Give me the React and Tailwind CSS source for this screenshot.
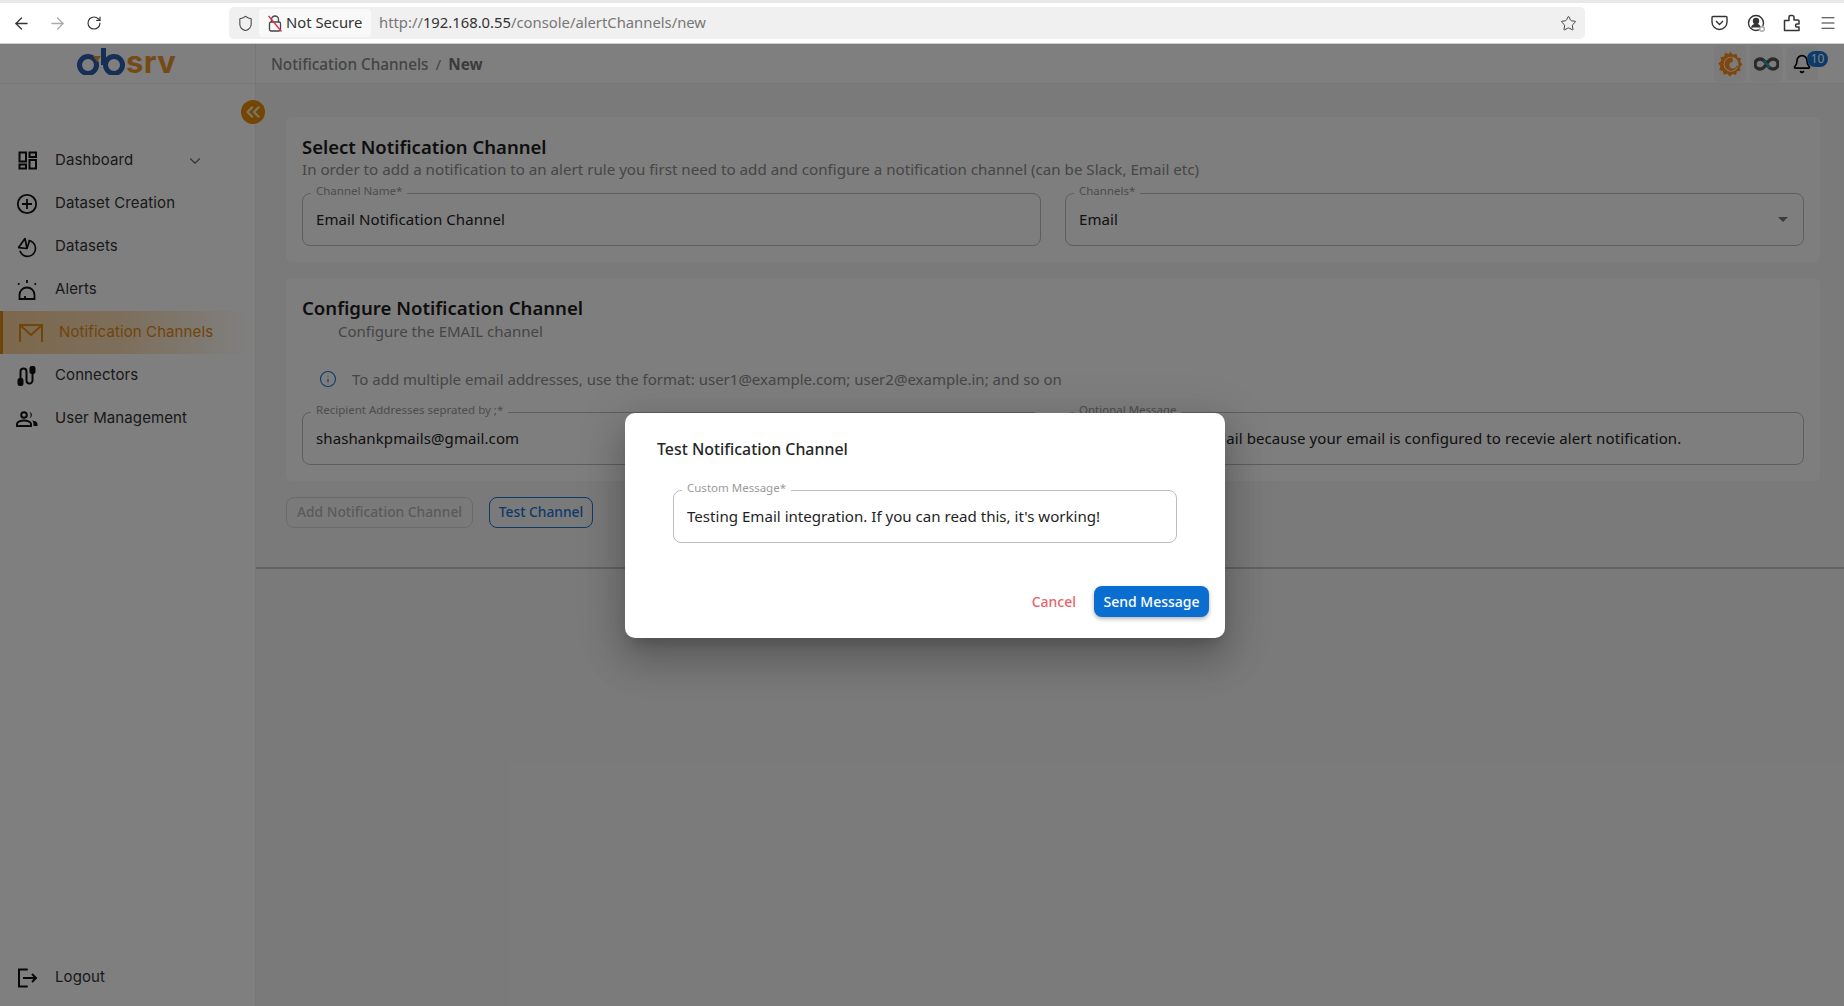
import { ArrowLeft, ArrowRight, RotateCw, Shield, Star, Menu, ChevronDown, ChevronsLeft, Info, Bell } from "lucide-react";

const navBefore = [
  { label: "Dashboard", icon: DashboardIcon, chevron: true },
  { label: "Dataset Creation", icon: PlusCircleIcon },
  { label: "Datasets", icon: PieIcon },
  { label: "Alerts", icon: SirenIcon },
];

const navAfter = [
  { label: "Connectors", icon: ConnectorIcon },
  { label: "User Management", icon: UsersIcon },
];

function DashboardIcon() {
  return (
    <svg width="19" height="19" viewBox="0 0 19 19" fill="none" stroke="#111" strokeWidth="2">
      <rect x="1.500" y="1.500" width="6.500" height="9" />
      <rect x="11.500" y="1.500" width="6.500" height="4.500" />
      <rect x="1.500" y="13.500" width="6.500" height="4" />
      <rect x="11.500" y="9" width="6.500" height="8.500" />
    </svg>
  );
}

function PlusCircleIcon() {
  return (
    <svg width="22" height="22" viewBox="0 0 22 22" fill="none" stroke="#111" strokeWidth="1.800">
      <circle cx="11" cy="11" r="9.200" />
      <path d="M11 6v10M6 11h10" />
    </svg>
  );
}

function PieIcon() {
  return (
    <svg width="22" height="22" viewBox="0 0 22 22" fill="none" stroke="#111" strokeWidth="1.700" strokeLinejoin="round">
      <path d="M9 2.500 2.600 11.600 11 12.500z" />
      <path d="M12.500 4.400a8 8 0 1 1-8.600 10.400" />
      <path d="M11 12.500l2.600-8" />
    </svg>
  );
}

function SirenIcon() {
  return (
    <svg width="22" height="22" viewBox="0 0 22 22" fill="none" stroke="#111" strokeWidth="1.800">
      <path d="M3.500 20v-4a7.500 7.500 0 0 1 15 0v4H3.500z" />
      <path d="M9 20v-3" />
      <path d="M11 1v3M2 4.500l1.500 1M20 4.500l-1.500 1" />
    </svg>
  );
}

function MailIcon() {
  return (
    <svg width="26" height="20" viewBox="0 0 26 20" fill="none" stroke="#e08a14" strokeWidth="2">
      <path d="M2 19V2h22v17" />
      <path d="M2 2l11 10L24 2" />
    </svg>
  );
}

function ConnectorIcon() {
  return (
    <svg width="20" height="20" viewBox="0 0 20 20" fill="none" stroke="#111" strokeWidth="2">
      <path d="M3.500 14V5.500a3 3 0 0 1 6 0v9a3 3 0 0 0 6 0V6" />
      <rect x="1.500" y="13" width="4" height="6" rx="1.200" fill="#111" />
      <rect x="13.500" y="1" width="4" height="6" rx="1.200" fill="#111" />
    </svg>
  );
}

function UsersIcon() {
  return (
    <svg width="22" height="16" viewBox="0 0 22 16" fill="#111">
      <circle cx="8" cy="4" r="2.800" fill="none" stroke="#111" strokeWidth="2" />
      <path d="M13.500 1a3.200 3.200 0 0 1 0 6.200 5 5 0 0 0 0-6.200z" />
      <path d="M1 15v-2c0-2.400 4-3.600 7-3.600s7 1.200 7 3.600v2z" fill="none" stroke="#111" strokeWidth="2" />
      <path d="M16 9.500c3 .3 5.500 1.400 5.500 3.500v2H17.500v-2c0-1.400-.6-2.500-1.500-3.500z" />
    </svg>
  );
}

function LogoutIcon() {
  return (
    <svg width="21" height="20" viewBox="0 0 21 20" fill="none" stroke="#111" strokeWidth="2">
      <path d="M10 1.500H2v17h8" strokeLinecap="round" />
      <path d="M6 10h13M15 6l4 4-4 4" />
    </svg>
  );
}

function PuzzleIcon() {
  return (
    <svg width="18" height="18" viewBox="0 0 18 18" fill="none" stroke="#333" strokeWidth="1.500" strokeLinejoin="round" className="ml-[18px]">
      <path d="M1.500 16.500V6.500H6V6a1.800 1.800 0 0 1 0-.8V3a1.500 1.500 0 0 1 1.500-1.500h1.700a1.800 1.800 0 0 1 1.800 1.800V6h4a1 1 0 0 1 1 1v3h-2a1.500 1.500 0 0 0 0 3h2v3.500z" />
    </svg>
  );
}

function GrafanaIcon() {
  return (
    <svg width="25" height="26" viewBox="0 0 24 25">
      <path fill="#ff8c1a" d="M12 .8l2.300 2.900 3.500-1 .8 3.500 3.600.8-1 3.400 2.300 2.600-2.600 2.300.8 3.600-3.500.6-.9 3.500-3.500-1-2.500 2.600-2.400-2.700-3.500.9-.7-3.600-3.500-1 1.100-3.400L.4 11.800l2.800-2.300-.9-3.500 3.600-.7 1-3.500 3.400 1.100z" />
      <circle cx="12.500" cy="12.800" r="7.200" fill="#f7f7f7" />
      <path d="M14 6.800a6 6 0 1 0 4.400 7.400c-.5 2-2.500 3.400-4.600 3a4 4 0 0 1-3-4.600 3 3 0 0 1 3.500-2.300" fill="#ff8c1a" stroke="#ff8c1a" strokeWidth="0.800" />
      <circle cx="13" cy="13" r="1.800" fill="#f7f7f7" />
    </svg>
  );
}

function InfinityIcon() {
  return (
    <svg width="25" height="14" viewBox="0 0 25 14" fill="none">
      <path d="M12.500 7C10.500 3.500 8.500 2 6 2a5 5 0 0 0 0 10c2.500 0 4.500-1.500 6.500-5zm0 0c2-3.500 4-5 6.500-5a5 5 0 0 1 0 10c-2.500 0-4.500-1.500-6.500-5z" stroke="#555" strokeWidth="3.400" />
      <path d="M9.500 3.500l3 3.500 3 3.500" stroke="#1ba3b8" strokeWidth="2.600" />
    </svg>
  );
}

function Logo() {
  return (
    <div className="flex items-end h-[27px] mt-[4px] ml-[76px]">
      <svg width="50" height="27" viewBox="0 0 50 27" fill="none" className="shrink-0">
        <circle cx="12" cy="17" r="8.500" stroke="#2f5cae" strokeWidth="5" />
        <circle cx="38" cy="17" r="8.500" stroke="#2f5cae" strokeWidth="5" />
        <path d="M27.500 0v17" stroke="#2f5cae" strokeWidth="5" />
        <path d="M17 8h8l-4 6z" fill="#e8952f" />
      </svg>
      <span className="text-[31px] leading-[27px] font-bold text-[#e8952f] tracking-[0.4px] font-['Inter',sans-serif]">srv</span>
    </div>
  );
}

function Field({ label, children, className }) {
  return (
    <div className={`relative h-[53px] rounded-[8px] border border-[#bdbdbd] flex items-center px-[13px] ${className}`}>
      <span className="absolute left-[8px] -top-[11px] px-[5px] text-[11.500px] leading-[16px] text-[#9a9a9a] bg-inherit">{label}</span>
      {children}
    </div>
  );
}

export default function App() {
  return (
    <div className="relative w-[1844px] h-[1006px] overflow-hidden flex flex-col bg-white font-['Noto_Sans',sans-serif]">
      {/* browser bar */}
      <div className="h-[44px] shrink-0 flex flex-col">
        <div className="h-[3px] bg-[#e8e8e8]" />
        <div className="flex-1 flex items-center bg-white border-b border-[#cfcfcf]">
          <ArrowLeft size={19} strokeWidth={1.600} className="ml-[12px] text-[#333]" />
          <ArrowRight size={19} strokeWidth={1.600} className="ml-[17px] text-[#aaa]" />
          <RotateCw size={16} strokeWidth={1.700} className="ml-[19px] text-[#333]" />
          <div className="ml-[127px] w-[1356px] h-[32px] rounded-[5px] bg-[#f0f0f0] flex items-center">
            <Shield size={17} strokeWidth={1.500} className="ml-[8px] text-[#444]" />
            <div className="ml-[5px] w-[112px] h-[28px] rounded-[4px] bg-[#f9f9f9] flex items-center pl-[9px] gap-[3px]">
              <span className="relative flex">
                <svg width="14" height="17" viewBox="0 0 14 17" fill="none" stroke="#444" strokeWidth="1.300">
                  <path d="M3.500 7V4.500a3.500 3.500 0 0 1 7 0V7" />
                  <rect x="1.500" y="7" width="11" height="9" rx="1.500" />
                  <path d="M0.500 1 13.500 16.500" stroke="#e0304e" strokeWidth="1.400" />
                </svg>
              </span>
              <span className="text-[14.800px] leading-none text-[#333] pb-[2px] ml-[1px]">Not Secure</span>
            </div>
            <span className="ml-[8px] text-[14.800px] leading-none text-[#777] pb-[2px]">
              http://<span className="text-[#333]">192.168.0.55</span>/console/alertChannels/new
            </span>
            <Star size={17} strokeWidth={1.400} className="ml-auto mr-[8px] text-[#444]" />
          </div>
          <svg width="17" height="16" viewBox="0 0 17 16" fill="none" stroke="#333" strokeWidth="1.400" className="ml-[126px]">
            <path d="M2 1.500h13a1 1 0 0 1 1 1V7a7.500 7.500 0 0 1-15 0V2.500a1 1 0 0 1 1-1z" />
            <path d="M5 6l3.500 3.500L12 6" />
          </svg>
          <svg width="18" height="18" viewBox="0 0 18 18" fill="none" stroke="#333" strokeWidth="1.400" className="ml-[19px]">
            <circle cx="9" cy="9" r="7.500" />
            <circle cx="9" cy="7" r="2.500" fill="#333" />
            <path d="M4.500 13.500c1-2 2.500-3 4.500-3s3.500 1 4.500 3" fill="#333" />
            <circle cx="15" cy="15" r="2.300" fill="#fff" stroke="#aaa" />
          </svg>
          <PuzzleIcon />
          <Menu size={18} strokeWidth={1.500} className="ml-[18px] text-[#333]" />
        </div>
      </div>

      {/* app header */}
      <div className="h-[40px] shrink-0 flex items-stretch bg-white border-b border-[#ededed]">
        <div className="w-[256px] shrink-0 border-r border-[#ececec]">
          <Logo />
        </div>
        <div className="flex-1 flex items-center pl-[15px] text-[15.300px] text-[#888]">
          <span className="font-medium pt-[2px]">Notification Channels</span>
          <span className="mx-[7px] pt-[2px]">/</span>
          <span className="font-bold text-[#777] pt-[2px]">New</span>
          <div className="ml-auto flex items-center gap-[4px] mr-[26px]">
            <div className="w-[32px] h-[37px] rounded-[4px] bg-[#f7f7f7] flex items-center justify-center"><GrafanaIcon /></div>
            <div className="w-[32px] h-[37px] rounded-[4px] bg-[#f7f7f7] flex items-center justify-center"><InfinityIcon /></div>
            <div className="relative w-[32px] h-[33px] rounded-[4px] bg-[#f7f7f7] flex items-center justify-center">
              <Bell size={20} strokeWidth={2} className="text-black" />
              <span className="absolute top-[4px] -right-[10px] w-[21px] h-[16px] rounded-full bg-[#1976d2] text-[12px] leading-[16px] text-center text-white">10</span>
            </div>
          </div>
        </div>
      </div>

      <div className="flex-1 flex min-h-0">
        {/* sidebar */}
        <aside className="relative w-[256px] shrink-0 border-r border-[#ececec] flex flex-col pt-[55px] font-['Inter',sans-serif]">
          <button className="absolute -right-[10px] top-[16px] w-[24px] h-[24px] rounded-full bg-[#e98a07] flex items-center justify-center">
            <ChevronsLeft size={22} strokeWidth={2.500} className="text-[#fbe6c4]" />
          </button>
          {navBefore.map((item) => (
            <NavRow key={item.label} {...item} />
          ))}
          <div className="h-[43px] flex items-center border-l-[3px] border-[#e08a14] bg-gradient-to-r from-[#f9d09a] via-[#f9d09a]/70 to-transparent mr-[5px]">
            <div className="w-[30px] ml-[15px]"><MailIcon /></div>
            <span className="ml-[11px] text-[15px] tracking-[0.1px] text-[#e08a14]">Notification Channels</span>
          </div>
          {navAfter.map((item) => (
            <NavRow key={item.label} {...item} />
          ))}
          <div className="mt-auto mb-[7px]">
            <NavRow label="Logout" icon={LogoutIcon} />
          </div>
        </aside>

        {/* page */}
        <main className="flex-1 min-w-0 bg-[#f5f5f5]">
          <div className="h-[485px] pl-[30px] pr-[24px] pt-[33px] bg-[#f5f5f5] border-b-2 border-[#c4c4c4]">
            <section className="h-[145px] rounded-[6px] bg-[#fcfcfc] px-[16px] pt-[19px]">
              <h2 className="text-[18.500px] leading-[22px] font-semibold text-[#1c1c1c]">Select Notification Channel</h2>
              <p className="text-[15.150px] leading-[22px] text-[#8c8c8c] whitespace-nowrap">In order to add a notification to an alert rule you first need to add and configure a notification channel (can be Slack, Email etc)</p>
              <div className="mt-[13px] flex gap-[24px]">
                <Field label="Channel Name*" className="w-[739px] bg-[#fcfcfc]">
                  <span className="text-[15px] tracking-[0.1px] text-[#222]">Email Notification Channel</span>
                </Field>
                <Field label="Channels*" className="w-[739px] bg-[#fcfcfc]">
                  <span className="text-[15px] tracking-[0.1px] text-[#222]">Email</span>
                  <span className="ml-auto mr-[2px] border-x-[5px] border-t-[5px] border-x-transparent border-t-[#777]" />
                </Field>
              </div>
            </section>
            <section className="mt-[16px] h-[203px] rounded-[6px] bg-[#fcfcfc] px-[16px] pt-[18px]">
              <h2 className="text-[18.600px] leading-[24px] font-semibold text-[#1c1c1c]">Configure Notification Channel</h2>
              <p className="ml-[36px] text-[15px] leading-[22px] text-[#8c8c8c]">Configure the EMAIL channel</p>
              <div className="mt-[25px] ml-[17px] flex items-center h-[24px]">
                <Info size={18} strokeWidth={1.500} className="text-[#1976d2]" />
                <span className="ml-[15px] text-[15px] text-[#8c8c8c] whitespace-nowrap">To add multiple email addresses, use the format: user1@example.com; user2@example.in; and so on</span>
              </div>
              <div className="mt-[21px] flex gap-[24px]">
                <Field label="Recipient Addresses seprated by ;*" className="w-[739px] bg-[#fcfcfc]">
                  <span className="text-[15px] tracking-[0.1px] text-[#222]">shashankpmails@gmail.com</span>
                </Field>
                <Field label="Optional Message" className="w-[739px] bg-[#fcfcfc]">
                  <span className="text-[15px] tracking-[0.1px] text-[#222] whitespace-nowrap">You received this email because your email is configured to recevie alert notification.</span>
                </Field>
              </div>
            </section>
            <div className="mt-[16px] flex gap-[16px]">
              <button className="w-[187px] h-[31px] rounded-[8px] border border-[#d4d4d4] text-[13.800px] font-medium text-[#b5b5b5]">Add Notification Channel</button>
              <button className="w-[104px] h-[31px] rounded-[8px] border border-[#1976d2] text-[13.800px] font-medium text-[#1976d2]">Test Channel</button>
            </div>
          </div>
        </main>
      </div>

      {/* dialog */}
      <div className="absolute inset-x-0 top-[44px] bottom-0 bg-black/50 flex items-center justify-center pl-[6px]">
        <div className="w-[600px] h-[225px] rounded-[10px] bg-white pt-[26px] shadow-[0_11px_15px_-7px_rgba(0,0,0,0.2),0_24px_38px_3px_rgba(0,0,0,0.14),0_9px_46px_8px_rgba(0,0,0,0.12)]">
          <h2 className="ml-[32px] text-[15.900px] leading-[20px] font-medium text-[#262626]">Test Notification Channel</h2>
          <Field label="Custom Message*" className="ml-[48px] mt-[31px] w-[504px] bg-white">
            <span className="text-[15.100px] text-[#1f1f1f]">Testing Email integration. If you can read this, it's working!</span>
          </Field>
          <div className="mt-[43px] mr-[16px] flex items-center justify-end">
            <span className="text-[14px] font-medium text-[#e8636b]">Cancel</span>
            <button className="ml-[18px] w-[115px] h-[31px] rounded-[8px] bg-[#0a6ed1] text-[14px] font-medium text-white shadow-[0_2px_4px_rgba(0,0,0,0.3)]">Send Message</button>
          </div>
        </div>
      </div>
    </div>
  );
}

function NavRow({ label, icon: Icon, chevron }) {
  return (
    <div className="h-[43px] flex items-center">
      <div className="w-[28px] ml-[13px] flex justify-center"><Icon /></div>
      <span className="ml-[14px] text-[15px] tracking-[0.1px] text-[#333]">{label}</span>
      {chevron && <ChevronDown size={18} strokeWidth={1.500} className="ml-[53px] text-[#666]" />}
    </div>
  );
}
